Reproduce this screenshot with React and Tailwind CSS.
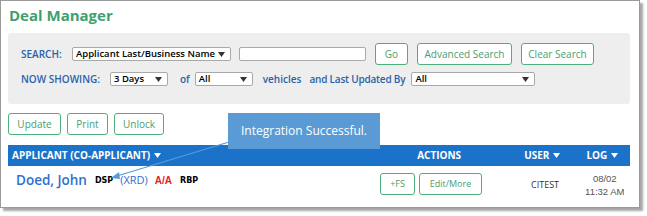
import React from 'react';

const Caret = ({ className = '' }) => (
  <svg width="7" height="5" viewBox="0 0 7 5" className={`shrink-0 ${className}`}>
    <path d="M0 0 L7 0 L3.5 5 Z" fill="currentColor" />
  </svg>
);

const Select = ({ label, className = '' }) => (
  <div
    className={`shrink-0 whitespace-nowrap h-[14px] flex items-center justify-between bg-white border border-[#a9a9a9] rounded-[2px] pl-[3px] pr-[5px] text-[9.5px] font-semibold text-black ${className}`}
  >
    <span>{label}</span>
    <Caret className="text-[#333]" />
  </div>
);

const GreenBtn = ({ children, className = '' }) => (
  <button
    className={`shrink-0 whitespace-nowrap h-[22px] bg-white border border-[#4cb07b] rounded-[3px] text-[#4a9d6e] text-[10px] flex items-center justify-center ${className}`}
  >
    {children}
  </button>
);

const Label = ({ children, className = '' }) => (
  <span className={`shrink-0 whitespace-nowrap text-[10px] font-semibold text-[#2a62a8] ${className}`}>
    {children}
  </span>
);

export default function App() {
  return (
    <div
      className="w-[647px] h-[216px] bg-white relative"
      style={{ fontFamily: '"Open Sans", "Noto Sans", sans-serif' }}
    >
      <div className="w-[640px] h-[208px] border border-[#9a9a9a] shadow-[3px_3px_2px_rgba(0,0,0,0.35)] bg-white pl-[7px] pr-[9px] pt-[2px]">
        <h1 className="text-[15px] leading-[24px] font-bold text-[#3f9f70] ml-[1px]">
          Deal Manager
        </h1>

        {/* search panel */}
        <div className="mt-[6px] h-[71px] bg-[#eeeeee] rounded-[3px] pl-[13px] pt-[10px]">
          <div className="flex items-center h-[22px]">
            <Label className="w-[51px]">SEARCH:</Label>
            <Select label="Applicant Last/Business Name" className="w-[159px]" />
            <div className="shrink-0 ml-[8px] w-[127px] h-[14px] bg-white border border-[#a9a9a9] rounded-[2px]" />
            <GreenBtn className="ml-[9px] w-[33px]">Go</GreenBtn>
            <GreenBtn className="ml-[9px] w-[95px]">Advanced Search</GreenBtn>
            <GreenBtn className="ml-[9px] w-[73px]">Clear Search</GreenBtn>
          </div>
          <div className="flex items-center h-[16px] mt-[6px]">
            <Label className="w-[89px]">NOW SHOWING:</Label>
            <Select label="3 Days" className="w-[58px]" />
            <Label className="ml-[12px]">of</Label>
            <Select label="All" className="ml-[5px] w-[58px]" />
            <Label className="ml-[10px]">vehicles</Label>
            <Label className="ml-[8px] tracking-[-0.2px]">and Last Updated By</Label>
            <Select label="All" className="ml-[6px] w-[124px]" />
          </div>
        </div>

        {/* action buttons */}
        <div className="flex mt-[9px] gap-[6px]">
          <GreenBtn className="w-[53px]">Update</GreenBtn>
          <GreenBtn className="w-[41px]">Print</GreenBtn>
          <GreenBtn className="w-[50px]">Unlock</GreenBtn>
        </div>

        {/* table header */}
        <div className="mt-[10px] h-[21px] w-[622px] bg-[#1b73c9] flex items-center text-white text-[10px] font-bold whitespace-nowrap">
          <span className="ml-[4px] flex items-center gap-[4px]">
            APPLICANT (CO-APPLICANT) <Caret />
          </span>
          <span className="ml-[256px]">ACTIONS</span>
          <span className="ml-[63px] flex items-center gap-[4px]">
            USER <Caret />
          </span>
          <span className="ml-[26px] flex items-center gap-[4px]">
            LOG <Caret />
          </span>
        </div>

        {/* row */}
        <div className="flex items-center h-[36px] w-[622px] whitespace-nowrap">
          <div className="w-[372px] shrink-0 flex items-center -mt-[8px]">
            <span className="ml-[8px] text-[13.5px] font-semibold text-[#2e6fd0]">Doed, John</span>
            <span className="ml-[8px] text-[8px] font-bold text-black mt-[2px]" style={{ fontFamily: '"DejaVu Sans", sans-serif' }}>DSP</span>
            <span className="ml-[7px] text-[11px] text-[#2e6fd0]">(XRD)</span>
            <span className="ml-[7px] text-[10px] font-bold text-[#e8221e]" style={{ fontFamily: '"Liberation Sans", sans-serif' }}>A/A</span>
            <span className="ml-[8px] text-[8px] font-bold text-black mt-[1px]" style={{ fontFamily: '"DejaVu Sans", sans-serif' }}>RBP</span>
          </div>
          <GreenBtn className="w-[35px] !text-[9px]">+FS</GreenBtn>
          <GreenBtn className="ml-[4px] w-[63px] !text-[9px]">Edit/More</GreenBtn>
          <span className="ml-[49px] shrink-0 text-[9px] text-[#333] mt-[2px]">CITEST</span>
          <div className="ml-[26px] shrink-0 flex flex-col items-center text-[9.5px] text-[#555] leading-[13px] mt-[2px]" style={{ fontFamily: '"Liberation Sans", sans-serif' }}>
            <span>08/02</span>
            <span>11:32 AM</span>
          </div>
        </div>
      </div>

      {/* callout */}
      <div className="absolute left-[228px] top-[113px] w-[152px] h-[36px] bg-[#5b9bd5] text-white text-[12px] flex items-center justify-center whitespace-nowrap">
        Integration Successful.
      </div>
      <svg className="absolute left-0 top-0 pointer-events-none" width="647" height="216">
        <line x1="229" y1="142" x2="117" y2="176" stroke="#5b9bd5" strokeWidth="1.2" />
        <path d="M111 178 L119 172 L120 179 Z" fill="#5b9bd5" />
      </svg>
    </div>
  );
}
